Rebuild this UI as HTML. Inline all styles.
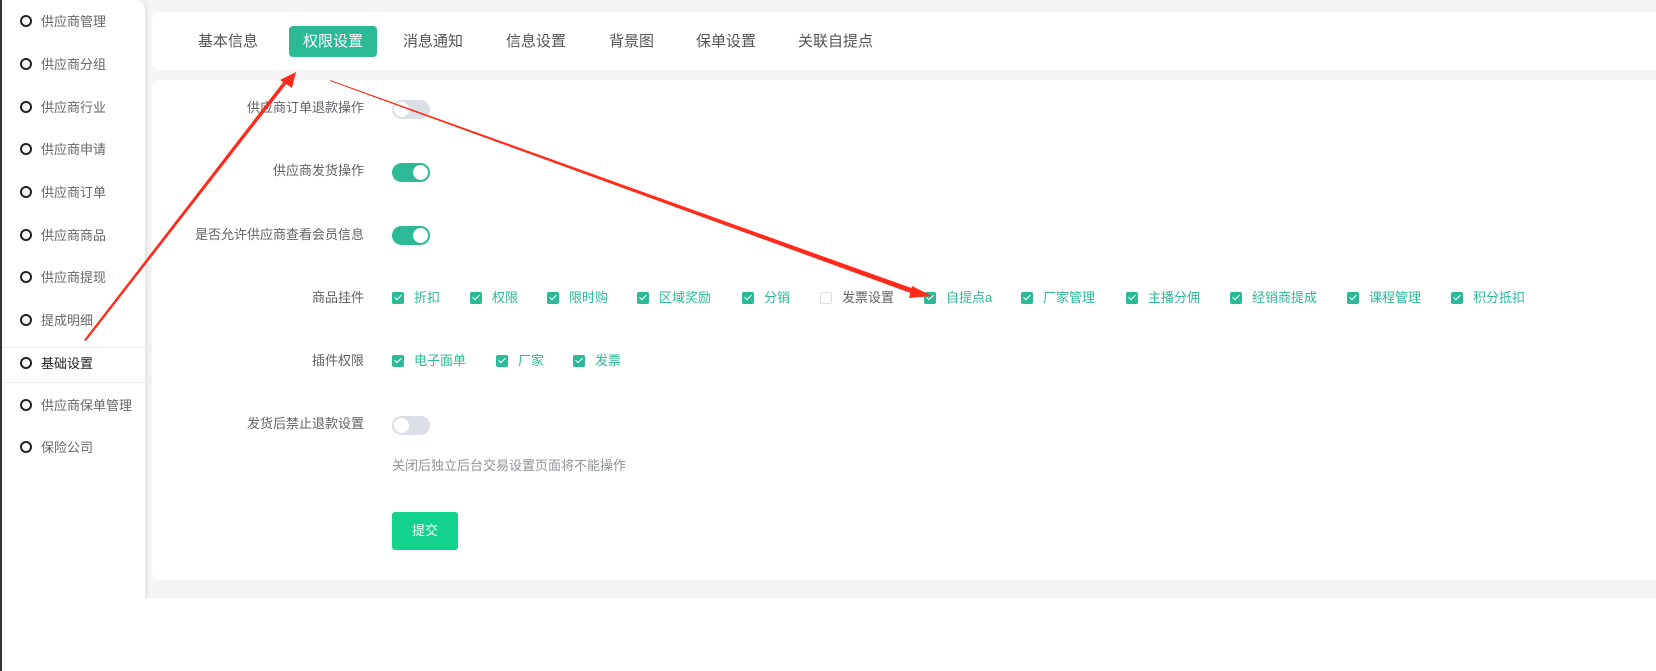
<!DOCTYPE html><html><head><meta charset="utf-8"><style>
body{margin:0;width:1656px;height:671px;background:#f5f5f5;font-family:"Liberation Sans","Noto Sans CJK SC",sans-serif;position:relative;overflow:hidden;font-size:13px;color:#606266}
.side{position:absolute;left:0;top:0;width:143px;height:671px;background:#fff;border-left:2px solid #333;box-shadow:2px 0 6px rgba(0,0,0,.08);border-top-right-radius:10px}
.side div{position:absolute;left:18px;height:20px;line-height:20px;font-size:13px;color:#666}
.side div:before{content:"";display:inline-block;width:8px;height:8px;border:2px solid #222;border-radius:50%;margin-right:9px;vertical-align:-1px}
.act{color:#222!important}
.card{position:absolute;background:#fff;border-radius:8px}
.tab{position:absolute;top:26px;height:31px;line-height:31px;font-size:15px;color:#555}
.lab{position:absolute;right:1292px;font-size:13px;color:#606266;text-align:right;white-space:nowrap;line-height:16px}
.sw{position:absolute;left:392px;width:38px;height:19px;border-radius:10px;background:#dcdfe6}
.sw:after{content:"";position:absolute;top:2px;left:2px;width:15px;height:15px;border-radius:50%;background:#fff}
.sw.on{background:#2bb996}.sw.on:after{left:21px}
.cb{position:absolute;font-size:13px;color:#2bb996;white-space:nowrap;display:flex;align-items:center;height:16px;line-height:16px}
.cb:before{content:"";display:block;box-sizing:border-box;width:12px;height:12px;background:#2bb996;border-radius:2px;margin-right:10px;
background-image:linear-gradient(#2bb996,#2bb996);}
.cb i{position:absolute;left:4px;top:3px;width:3px;height:6px;border:solid #fff;border-width:0 1.5px 1.5px 0;transform:rotate(45deg)}
.cb.off{color:#606266}.cb.off:before{background:#fff;border:1px solid #dcdfe6}
</style></head><body>
<div class="side">
<div style="top:12px">供应商管理</div><div style="top:55px">供应商分组</div><div style="top:98px">供应商行业</div><div style="top:140px">供应商申请</div><div style="top:183px">供应商订单</div><div style="top:226px">供应商商品</div><div style="top:268px">供应商提现</div><div style="top:311px">提成明细</div>
<span style="position:absolute;left:0;top:347px;width:150px;height:34px;border-top:1px solid #ebeef5;border-bottom:1px solid #ebeef5"></span>
<div class="act" style="top:354px">基础设置</div><div style="top:396px">供应商保单管理</div><div style="top:438px">保险公司</div>
</div>
<div class="card" style="left:152px;top:12px;width:1510px;height:58px"></div>
<div class="tab" style="left:198px">基本信息</div>
<div class="tab" style="left:289px;width:88px;background:#2bb996;color:#fff;border-radius:4px;text-align:center">权限设置</div>
<div class="tab" style="left:403px">消息通知</div><div class="tab" style="left:506px">信息设置</div><div class="tab" style="left:609px">背景图</div><div class="tab" style="left:696px">保单设置</div><div class="tab" style="left:798px">关联自提点</div>
<div class="card" style="left:152px;top:80px;width:1510px;height:500px"></div>
<div style="position:absolute;left:143px;top:598px;width:1513px;height:73px;background:#fff"></div>
<div class="lab" style="top:100px">供应商订单退款操作</div><div class="sw" style="top:100px"></div>
<div class="lab" style="top:163px">供应商发货操作</div><div class="sw on" style="top:163px"></div>
<div class="lab" style="top:227px">是否允许供应商查看会员信息</div><div class="sw on" style="top:226px"></div>
<div class="lab" style="top:290px">商品挂件</div>
<div class="cb" style="left:392px;top:290px"><i></i>折扣</div><div class="cb" style="left:470px;top:290px"><i></i>权限</div><div class="cb" style="left:547px;top:290px"><i></i>限时购</div><div class="cb" style="left:637px;top:290px"><i></i>区域奖励</div><div class="cb" style="left:742px;top:290px"><i></i>分销</div><div class="cb off" style="left:820px;top:290px">发票设置</div><div class="cb" style="left:924px;top:290px"><i></i>自提点a</div><div class="cb" style="left:1021px;top:290px"><i></i>厂家管理</div><div class="cb" style="left:1126px;top:290px"><i></i>主播分佣</div><div class="cb" style="left:1230px;top:290px"><i></i>经销商提成</div><div class="cb" style="left:1347px;top:290px"><i></i>课程管理</div><div class="cb" style="left:1451px;top:290px"><i></i>积分抵扣</div>
<div class="lab" style="top:353px">插件权限</div>
<div class="cb" style="left:392px;top:353px"><i></i>电子面单</div><div class="cb" style="left:496px;top:353px"><i></i>厂家</div><div class="cb" style="left:573px;top:353px"><i></i>发票</div>
<div class="lab" style="top:416px">发货后禁止退款设置</div><div class="sw" style="top:416px"></div>
<div style="position:absolute;left:392px;top:455px;color:#909399;font-size:13px">关闭后独立后台交易设置页面将不能操作</div>
<div style="position:absolute;left:392px;top:512px;width:66px;height:38px;line-height:38px;background:#13d28b;color:#fff;border-radius:3px;text-align:center;font-size:13px">提交</div>
<svg style="position:absolute;left:0;top:0" width="1656" height="671">
<polygon points="84,340 86,341 287,83 284,81" fill="#ff2a1a"/>
<polygon points="296,72 280,80 292,88" fill="#ff2a1a"/>
<polygon points="330,80 330,81 916,295 917,290" fill="#ff2a1a"/>
<polygon points="932,296 912,286 909,298" fill="#ff2a1a"/>
</svg>
</body></html>
